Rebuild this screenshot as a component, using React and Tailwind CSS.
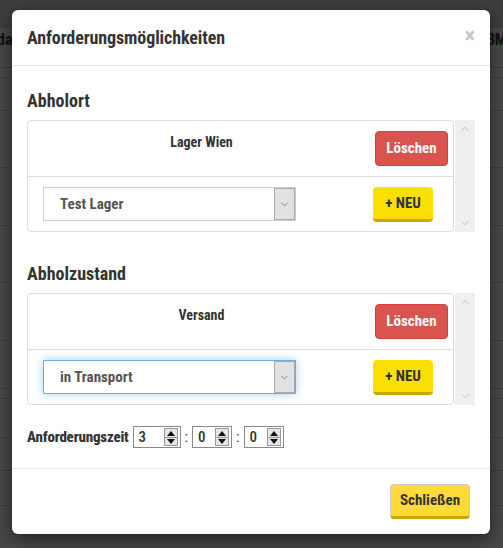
import { ChevronDown, ChevronUp } from "lucide-react";

function Spinner() {
  return (
    <div className="flex flex-col w-[14px] h-[18px] border border-[#999] bg-[#e6e6e6]">
      <div className="flex-1 flex items-center justify-center border-b border-[#999]">
        <svg width="8" height="5" viewBox="0 0 8 5"><path d="M0 5 L4 0 L8 5 Z" fill="#111" /></svg>
      </div>
      <div className="flex-1 flex items-center justify-center">
        <svg width="8" height="5" viewBox="0 0 8 5"><path d="M0 0 L4 5 L8 0 Z" fill="#111" /></svg>
      </div>
    </div>
  );
}

function TimeInput({ value, width }) {
  return (
    <div className={`flex items-center h-[22px] border border-[#888] bg-white pl-[5px] pr-[2px] ${width}`}>
      <span className="flex-1 text-[15px] font-medium text-[#333]">{value}</span>
      <Spinner />
    </div>
  );
}

function Section({ title, item, option, focused }) {
  return (
    <div>
      <h3 className="h-[24px] leading-[24px] text-[18px] font-bold text-[#333]">{title}</h3>
      <div className="mt-[7px] flex gap-px">
        <div className="w-[427px] h-[112px] border border-[#ddd] rounded-[4px] flex flex-col">
          <div className="h-[56px] flex border-b border-[#ddd]">
            <div className="flex-1 text-center pt-[11px] text-[14px] font-bold text-[#333]">{item}</div>
            <div className="pr-[5px] pt-[10px]">
              <button className="w-[73px] h-[35px] rounded-[4px] bg-[#d9534f] border border-[#d43f3a] text-white text-[15px] font-bold">
                Löschen
              </button>
            </div>
          </div>
          <div className="flex-1 flex items-start pt-[10px] pl-[15px] pr-[20px]">
            <div
              className={`w-[253px] h-[34px] flex items-stretch bg-white border ${
                focused ? "border-[#66afe9] shadow-[0_0_8px_rgba(102,175,233,0.6)]" : "border-[#ccc]"
              }`}
            >
              <span className="flex-1 flex items-center pl-[16px] text-[15px] font-bold text-[#555]">{option}</span>
              <span className="w-[21px] flex items-center justify-center bg-[#e1e1e1] border border-[#aaa]">
                <ChevronDown size={11} strokeWidth={1.5} color="#555" />
              </span>
            </div>
            <button className="ml-auto w-[60px] h-[35px] rounded-[4px] bg-[#fadf00] border-b-[3px] border-[#c9a900] text-[#333] text-[15px] font-bold">
              + NEU
            </button>
          </div>
        </div>
        <div className="w-[20px] h-[112px] bg-[#efefef] flex flex-col items-center justify-between py-[2px]">
          <ChevronUp size={14} strokeWidth={1.5} color="#bbb" />
          <ChevronDown size={14} strokeWidth={1.5} color="#bbb" />
        </div>
      </div>
    </div>
  );
}

export default function App() {
  const rows = [67, 77, 110, 167, 225, 282, 340, 388, 398, 437, 470, 505];
  return (
    <div className="relative w-[503px] h-[548px] overflow-hidden bg-[#474747] font-['Roboto_Condensed',Roboto,sans-serif] [font-stretch:condensed]">
      <div className="h-[28px] bg-[#3d3d3d]" />
      <div className="flex justify-between items-center h-[24px] text-[16px] font-bold text-[#111]">
        <span className="-ml-[3px]">da</span>
        <span className="-mr-[4px]">BM</span>
      </div>
      {rows.map((y) => (
        <div key={y} className="absolute left-0 right-0 h-px bg-[#3b3b3b]" style={{ top: y }} />
      ))}

      <div className="absolute left-[12px] top-[10px] w-[478px] h-[524px] bg-white rounded-[6px] shadow-[0_5px_15px_rgba(0,0,0,0.5)] flex flex-col">
        <div className="h-[56px] flex items-center justify-between pl-[15px] pr-[15px] border-b border-[#e5e5e5]">
          <h4 className="text-[18px] font-bold text-[#333] tracking-[-0.1px]">Anforderungsmöglichkeiten</h4>
          <span className="text-[22px] font-bold text-[#c8c8c8] leading-none -mt-[4px]">×</span>
        </div>

        <div className="pl-[15px] pt-[23px] flex flex-col">
          <Section title="Abholort" item="Lager Wien" option="Test Lager" />
          <div className="mt-[30px]">
            <Section title="Abholzustand" item="Versand" option="in Transport" focused />
          </div>
          <div className="mt-[21px] flex items-center gap-[3px] text-[#333]">
            <span className="text-[15px] font-extrabold tracking-[-0.2px] mr-[1px]">Anforderungszeit</span>
            <TimeInput value="3" width="w-[48px]" />
            <span className="text-[15px] px-[1px]">:</span>
            <TimeInput value="0" width="w-[40px]" />
            <span className="text-[15px] px-[1px]">:</span>
            <TimeInput value="0" width="w-[40px]" />
          </div>
        </div>

        <div className="mt-auto h-[66px] border-t border-[#e5e5e5] flex items-center justify-end pr-[20px]">
          <button className="w-[80px] h-[35px] rounded-[4px] bg-[#fedb3b] border border-[#ccc] border-b-[3px] border-b-[#c9a900] text-[#333] text-[15px] font-bold">
            Schließen
          </button>
        </div>
      </div>
    </div>
  );
}
